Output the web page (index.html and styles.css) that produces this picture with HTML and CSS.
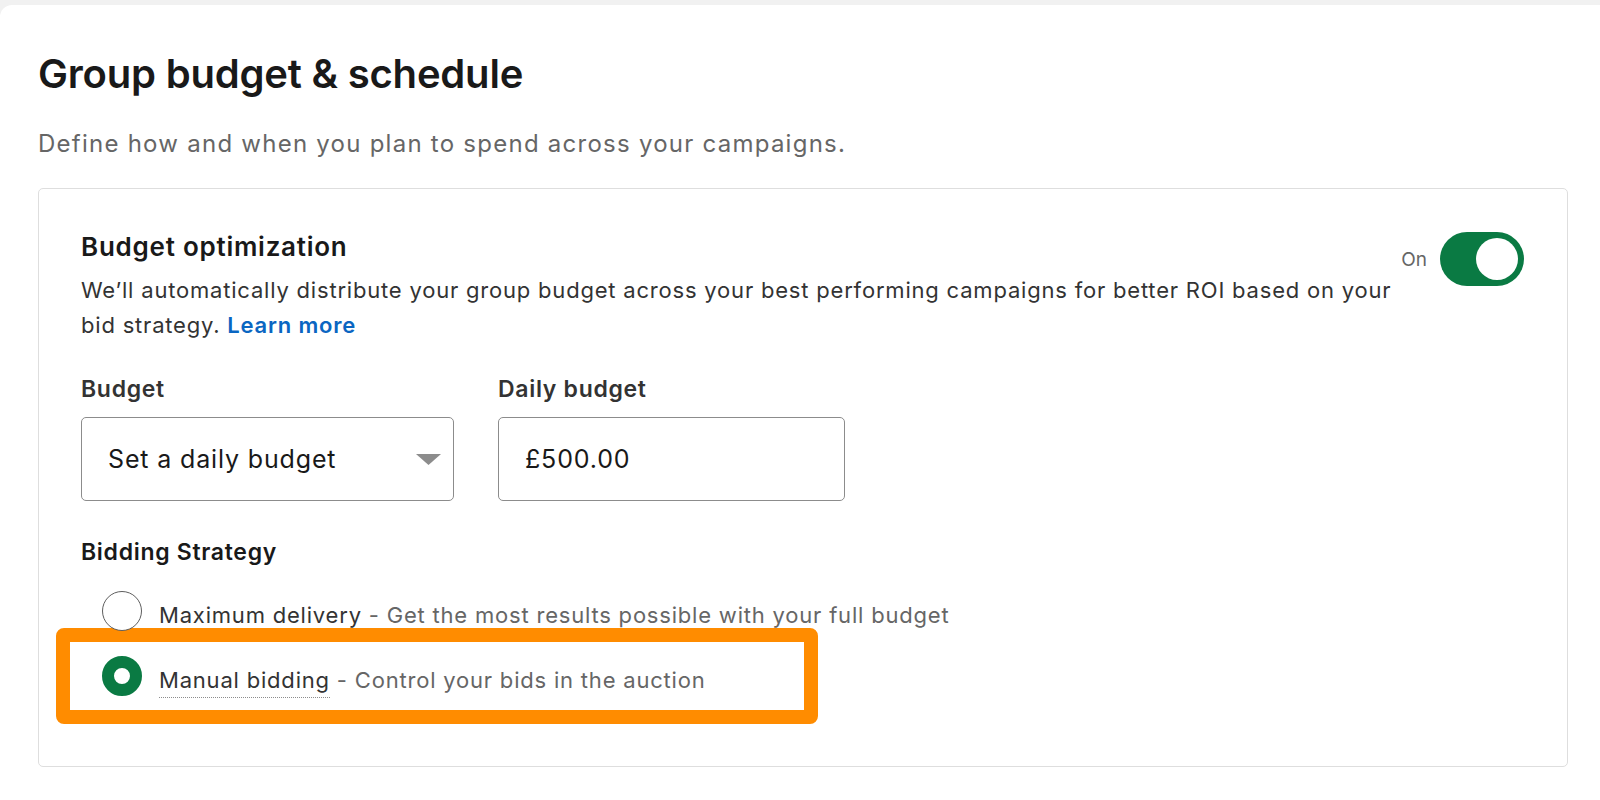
FILE: index.html
```html
<!DOCTYPE html>
<html lang="en">
<head>
<meta charset="utf-8">
<title>Group budget &amp; schedule</title>
<link rel="stylesheet" href="styles.css">
</head>
<body>
<main class="page">
  <h1 class="page-title">Group budget &amp; schedule</h1>
  <p class="page-subtitle">Define how and when you plan to spend across your campaigns.</p>

  <section class="panel">
    <div class="panel-header">
      <div class="panel-intro">
        <h2 class="panel-title">Budget optimization</h2>
        <p class="panel-desc">We’ll automatically distribute your group budget across your best performing campaigns for better ROI based on your bid strategy. <a class="link" href="#">Learn more</a></p>
      </div>
      <div class="toggle-group">
        <span class="toggle-label">On</span>
        <span class="toggle"><span class="toggle-knob"></span></span>
      </div>
    </div>

    <div class="fields">
      <div class="field field-budget">
        <label class="field-label">Budget</label>
        <div class="select">
          <span class="select-value">Set a daily budget</span>
          <svg class="select-arrow" width="25" height="11" viewBox="0 0 25 11"><path d="M0 0 H25 L12.5 11 Z" fill="#8c8c8c"/></svg>
        </div>
      </div>
      <div class="field field-daily">
        <label class="field-label">Daily budget</label>
        <div class="input">£500.00</div>
      </div>
    </div>

    <h3 class="section-label">Bidding Strategy</h3>
    <div class="options">
      <div class="option">
        <span class="radio"></span>
        <span class="option-text"><span class="option-name">Maximum delivery</span> - Get the most results possible with your full budget</span>
      </div>
      <div class="highlight">
        <div class="option">
          <span class="radio radio-checked"></span>
          <span class="option-text"><span class="option-name option-name-dotted">Manual bidding</span> - Control your bids in the auction</span>
        </div>
      </div>
    </div>
  </section>
</main>
</body>
</html>
```

FILE: styles.css
```css
* { box-sizing: border-box; }

html, body {
  margin: 0;
  padding: 0;
  background: #f1f1f1;
  font-family: Inter, "Liberation Sans", Arial, sans-serif;
}

.page {
  margin-top: 5px;
  background: #ffffff;
  border-top-left-radius: 12px;
  min-height: 795px;
  padding: 45px 32px 0 38px;
}

.page-title {
  margin: 0;
  font-size: 40px;
  line-height: 48px;
  font-weight: 600;
  color: #191919;
  letter-spacing: -0.2px;
}

.page-subtitle {
  margin: 30px 0 0;
  font-size: 24px;
  line-height: 32px;
  letter-spacing: 1.25px;
  color: #666666;
}

.panel {
  margin-top: 28px;
  width: 1530px;
  border: 1px solid #dedede;
  border-radius: 5px;
  padding: 42px 43px 42px 42px;
}

.panel-header {
  display: flex;
  align-items: flex-start;
}

.panel-intro {
  flex: 1;
  min-width: 0;
}

.panel-title {
  margin: 0;
  font-size: 26px;
  line-height: 32px;
  font-weight: 600;
  letter-spacing: 0.75px;
  color: #191919;
}

.panel-desc {
  margin: 10px 0 0;
  font-size: 22px;
  line-height: 35px;
  letter-spacing: 0.8px;
  color: #333333;
}

.link {
  color: #0a66c2;
  font-weight: 600;
  text-decoration: none;
}

.toggle-group {
  flex: none;
  display: flex;
  align-items: center;
  gap: 13px;
  margin-top: 1px;
}

.toggle-label {
  font-size: 19px;
  color: #666666;
}

.toggle {
  display: flex;
  align-items: center;
  justify-content: flex-end;
  width: 84px;
  height: 54px;
  border-radius: 27px;
  background: #0a7a43;
  padding: 0 6px;
}

.toggle-knob {
  width: 42px;
  height: 42px;
  border-radius: 50%;
  background: #ffffff;
}

.fields {
  display: flex;
  gap: 44px;
  margin-top: 32px;
}

.field-label {
  display: block;
  font-size: 23px;
  line-height: 28px;
  font-weight: 600;
  letter-spacing: 0.7px;
  color: #333333;
  margin-bottom: 14px;
}

.select,
.input {
  display: flex;
  align-items: center;
  height: 84px;
  border: 1px solid #8c8c8c;
  border-radius: 5px;
  font-size: 25px;
  letter-spacing: 0.85px;
  color: #191919;
}

.select {
  width: 373px;
  padding: 0 12px 0 26px;
  justify-content: space-between;
}

.select-arrow {
  display: block;
  margin-top: 1px;
}

.input {
  width: 347px;
  padding: 0 26px;
}

.section-label {
  margin: 37px 0 0;
  font-size: 23px;
  line-height: 28px;
  font-weight: 600;
  letter-spacing: 0.7px;
  color: #191919;
}

.options {
  margin-top: 25px;
  padding-left: 21px;
}

.option {
  display: flex;
  align-items: flex-start;
  gap: 17px;
  height: 40px;
}

.option-text {
  font-size: 22px;
  line-height: 28px;
  letter-spacing: 0.8px;
  margin-top: 10px;
  color: #666666;
  white-space: nowrap;
}

.option-name {
  color: #333333;
}

.option-name-dotted {
  border-bottom: 1px dotted #8c8c8c;
  padding-bottom: 4px;
}

.radio {
  flex: none;
  width: 40px;
  height: 40px;
  border-radius: 50%;
  border: 1.5px solid #5e5e5e;
  background: #ffffff;
}

.radio-checked {
  border: 12px solid #0a7a43;
}

.highlight {
  margin: -3px 0 0 -46px;
  width: 762px;
  border: 14px solid #ff8c00;
  border-radius: 8px;
  padding: 14px 0 14px 32px;
}
```
